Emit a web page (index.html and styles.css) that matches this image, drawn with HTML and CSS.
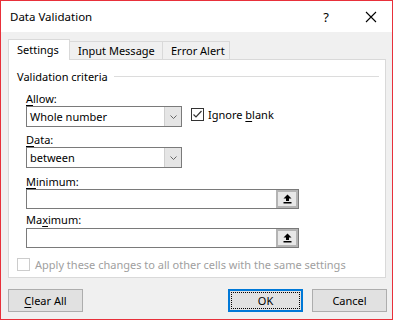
FILE: index.html
```html
<!DOCTYPE html>
<html>
<head>
    <title>Data Validation</title>
    <link rel="stylesheet" href="styles.css">
</head>
<body>
    <div class="dialog">
        <div class="titlebar">
            <span class="title">Data Validation</span>
            <span class="help">?</span>
            <svg class="close" width="12" height="12" viewBox="0 0 12 12">
                <path d="M1 1 L11 11 M11 1 L1 11" stroke="#000" stroke-width="1.1" fill="none"/>
            </svg>
        </div>

        <div class="tabs">
            <div class="tab active settings">Settings</div>
            <div class="tab input">Input Message</div>
            <div class="tab error">Error Alert</div>
        </div>

        <div class="panel">
            <div class="group">
                <span>Validation criteria</span>
                <div class="rule"></div>
            </div>

            <div class="fields">
                <div class="lbl allow"><u>A</u>llow:</div>
                <div class="row">
                    <div class="select">
                        <span>Whole number</span>
                        <div class="drop">
                            <svg width="9" height="6" viewBox="0 0 9 6"><path d="M1.5 1.5 L4.5 4.5 L7.5 1.5" stroke="#666" fill="none"/></svg>
                        </div>
                    </div>
                    <div class="check">
                        <span class="box">
                            <svg width="11" height="11" viewBox="0 0 11 11"><path d="M1.5 5.5 L4 8 L9.5 2" stroke="#333" stroke-width="1.2" fill="none"/></svg>
                        </span>
                        <span>Ignore <u>b</u>lank</span>
                    </div>
                </div>

                <div class="lbl"><u>D</u>ata:</div>
                <div class="select">
                    <span>between</span>
                    <div class="drop">
                        <svg width="9" height="6" viewBox="0 0 9 6"><path d="M1.5 1.5 L4.5 4.5 L7.5 1.5" stroke="#666" fill="none"/></svg>
                    </div>
                </div>

                <div class="lbl min"><u>M</u>inimum:</div>
                <div class="ref">
                    <div class="pick">
                        <svg width="9" height="10" viewBox="0 0 9 10"><path d="M4.5 0.5 L8.5 4.5 L6 4.5 L6 7 L3 7 L3 4.5 L0.5 4.5 Z" fill="#000"/><rect x="0.5" y="8" width="8" height="1.5" fill="#000"/></svg>
                    </div>
                </div>

                <div class="lbl max">Ma<u>x</u>imum:</div>
                <div class="ref">
                    <div class="pick">
                        <svg width="9" height="10" viewBox="0 0 9 10"><path d="M4.5 0.5 L8.5 4.5 L6 4.5 L6 7 L3 7 L3 4.5 L0.5 4.5 Z" fill="#000"/><rect x="0.5" y="8" width="8" height="1.5" fill="#000"/></svg>
                    </div>
                </div>
            </div>

            <div class="apply">
                <span class="box off"></span>
                <span>Apply these changes to all other cells with the same settings</span>
            </div>
        </div>

        <div class="buttons">
            <button class="btn"><u>C</u>lear All</button>
            <div class="spacer"></div>
            <button class="btn ok"><span>OK</span></button>
            <button class="btn">Cancel</button>
        </div>
    </div>
</body>
</html>
```

FILE: styles.css
```css
*{
    padding: 0;
    margin: 0;
    box-sizing: border-box;
    font-family: 'Noto Sans', sans-serif;
}

body{
    background: #fff;
    font-size: 11px;
    color: #000;
}

u{
    text-decoration: underline;
    text-underline-offset: 2px;
}

.dialog{
    width: 393px;
    height: 320px;
    border: 1px solid #e8303a;
    background: #f0f0f0;
}

.titlebar{
    height: 31px;
    background: #fff;
    display: flex;
    align-items: center;
    padding-left: 9px;

    .title{
        font-size: 11.5px;
        flex: 1;
    }

    .help{
        font-size: 13px;
        margin-right: 36px;
    }

    .close{
        margin-right: 15px;
    }
}

.tabs{
    display: flex;
    align-items: flex-end;
    height: 20px;
    margin-top: 7px;
    padding-left: 7px;

    .tab{
        height: 18px;
        line-height: 17px;
        border: 1px solid #d9d9d9;
        border-bottom: 0;
        padding-left: 8px;
        margin-left: -1px;
        white-space: nowrap;
        flex-shrink: 0;
        background: #f0f0f0;
    }

    .settings{
        width: 62px;
        margin-left: 0;
    }

    .input{
        width: 94px;
    }

    .error{
        width: 68px;
    }

    .active{
        height: 21px;
        line-height: 20px;
        margin-bottom: -1px;
        background: #fff;
        position: relative;
        z-index: 1;
    }
}

.panel{
    width: 378px;
    height: 219px;
    margin-left: 7px;
    border: 1px solid #d9d9d9;
    background: #fff;

    .group{
        display: flex;
        align-items: center;
        padding: 9px 6px 0 8px;
        line-height: 15px;

        .rule{
            flex: 1;
            height: 1px;
            background: #dcdcdc;
            margin-left: 6px;
        }
    }
}

.fields{
    padding-left: 17px;

    .lbl{
        line-height: 15px;
        margin-top: 5px;
    }

    .allow{
        margin-top: 7px;
    }

    .min{
        margin-top: 6px;
    }

    .max{
        margin-top: 3px;
        margin-bottom: 1px;
    }

    .row{
        display: flex;
        align-items: center;
    }

    .select{
        width: 156px;
        height: 21px;
        border: 1px solid #7a7a7a;
        display: flex;
        align-items: center;
        padding-left: 3px;
        background: #fff;

        span{
            flex: 1;
        }

        .drop{
            width: 17px;
            height: 19px;
            background: #e5e5e5;
            border-left: 1px solid #cfcfcf;
            display: flex;
            align-items: center;
            justify-content: center;
        }
    }

    .check{
        display: flex;
        align-items: center;
        margin-left: 9px;
        margin-top: -4px;
        gap: 4px;
    }

    .ref{
        width: 273px;
        height: 20px;
        border: 1px solid #7a7a7a;
        display: flex;
        justify-content: flex-end;
        background: #fff;

        .pick{
            width: 22px;
            height: 18px;
            border: 2px solid #b4b4b4;
            background: #e8e8e8;
            display: flex;
            align-items: center;
            justify-content: center;
        }
    }
}

.box{
    width: 13px;
    height: 13px;
    border: 1px solid #333;
    display: flex;
    align-items: center;
    justify-content: center;
}

.apply{
    display: flex;
    align-items: center;
    gap: 5px;
    margin: 9px 0 0 8px;
    color: #a0a0a0;

    .off{
        border-color: #cccccc;
    }
}

.buttons{
    display: flex;
    margin-top: 11px;
    padding-left: 7px;

    .spacer{
        flex: 1;
    }

    .btn{
        width: 75px;
        height: 23px;
        border: 1px solid #adadad;
        background: #e1e1e1;
        font-size: 11px;
        color: #000;
    }

    .ok{
        border: 2px solid #0078d7;
        margin-right: 9px;
        padding: 1px;

        span{
            display: block;
            height: 100%;
            line-height: 15px;
            border: 1px dotted #000;
        }
    }

    .btn:last-child{
        margin-right: 5px;
    }
}
```
